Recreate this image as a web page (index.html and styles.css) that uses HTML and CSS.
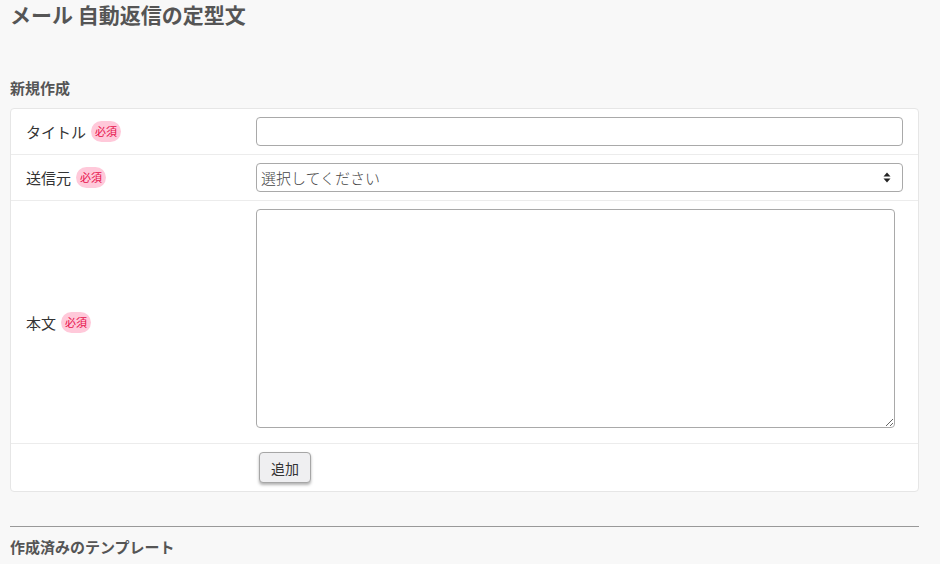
FILE: index.html
```html
<!DOCTYPE html>
<html lang="ja">
<head>
  <meta charset="UTF-8" />
  <title>メール 自動返信の定型文</title>
  <link rel="stylesheet" href="styles.css">
</head>
<body>
  <div class="page">
    <h1>メール 自動返信の定型文</h1>

    <h2 class="section-title">新規作成</h2>
    <form class="form-card">
      <div class="form-row">
        <div class="form-label">タイトル <span class="required">必須</span></div>
        <div class="form-field"><input type="text" class="text-input"></div>
      </div>
      <div class="form-row">
        <div class="form-label">送信元 <span class="required">必須</span></div>
        <div class="form-field">
          <div class="select-wrap">
            <select class="select-input">
              <option>選択してください</option>
            </select>
            <svg class="select-arrow" width="8" height="11" viewBox="0 0 8 11"><path d="M4 0.5L7.5 4.5H0.5Z M4 10.5L7.5 6.5H0.5Z" fill="#222"/></svg>
          </div>
        </div>
      </div>
      <div class="form-row">
        <div class="form-label">本文 <span class="required">必須</span></div>
        <div class="form-field"><textarea class="text-area"></textarea></div>
      </div>
      <div class="form-row">
        <div class="form-label"></div>
        <div class="form-field"><button type="button" class="btn">追加</button></div>
      </div>
    </form>

    <hr class="divider">
    <h2 class="section-title section-title--list">作成済みのテンプレート</h2>
  </div>
</body>
</html>
```

FILE: styles.css
```css
body {
  margin: 0;
  background: #f8f8f8;
  color: #444;
  font-family: "Noto Sans CJK JP", "Noto Sans", sans-serif;
}
.page {
  padding: 0 21px 0 10px;
}
h1 {
  margin: 0;
  font-size: 21px;
  line-height: 28px;
  font-weight: bold;
  color: #555;
}
.section-title {
  margin: 49px 0 9px;
  font-size: 15px;
  line-height: 22px;
  font-weight: bold;
  color: #555;
}
.section-title--list {
  margin-top: 9px;
}
.form-card {
  background: #fff;
  border: 1px solid #e6e6e6;
  border-radius: 4px;
  margin: 0;
}
.form-row {
  display: grid;
  grid-template-columns: 245px 1fr;
  align-items: center;
  border-top: 1px solid #ececec;
}
.form-row:first-child {
  border-top: none;
}
.form-label {
  display: flex;
  align-items: center;
  gap: 5px;
  padding-left: 15px;
  font-size: 15px;
  color: #333;
}
.required {
  display: inline-block;
  background: #ffc9da;
  color: #e6104a;
  font-size: 11px;
  line-height: 21px;
  padding: 0 4px;
  border-radius: 11px;
}
.form-field {
  padding: 8px 15px 8px 0;
}
.text-input,
.select-input,
.text-area {
  box-sizing: border-box;
  width: 100%;
  border: 1px solid #a9a9a9;
  border-radius: 4px;
  background: #fff;
  font-family: inherit;
  font-size: 15px;
  color: #444;
}
.text-input {
  display: block;
  height: 29px;
  padding: 0 4px;
}
.select-wrap {
  position: relative;
}
.select-input {
  display: block;
  height: 29px;
  padding: 0 4px;
  appearance: none;
  -webkit-appearance: none;
  font-weight: 300;
}
.select-arrow {
  position: absolute;
  right: 12px;
  top: 9px;
  pointer-events: none;
}
.text-area {
  display: block;
  width: 639px;
  height: 219px;
  margin-bottom: 7px;
  resize: vertical;
}
.btn {
  margin-left: 3px;
  height: 31px;
  padding: 0 11px;
  background: #efeff1;
  border: 1px solid #a6a6a6;
  border-radius: 4px;
  box-shadow: 0 2px 3px rgba(0,0,0,0.3);
  font-family: inherit;
  font-size: 14px;
  color: #333;
}
.divider {
  margin: 34px 0 0;
  border: none;
  border-top: 1px solid #999;
}
```
